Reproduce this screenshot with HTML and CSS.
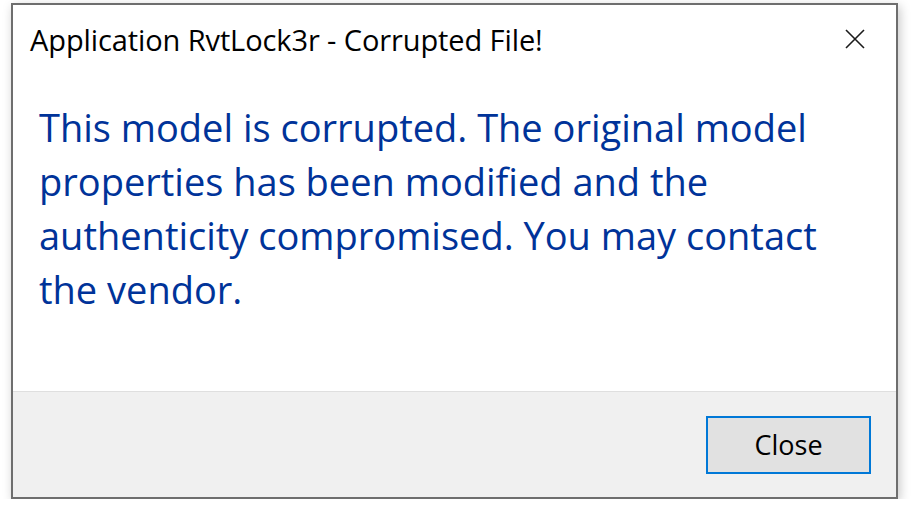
FILE: index.html
```html
<!DOCTYPE html>
<html lang="en">
<head>
<meta charset="utf-8">
<title>Application RvtLock3r - Corrupted File!</title>
<link rel="stylesheet" href="styles.css">
</head>
<body>
<div class="dialog">
  <div class="titlebar">
    <span class="title">Application RvtLock3r - Corrupted File!</span>
    <button class="close-x" aria-label="Close">
      <svg width="20" height="20" viewBox="0 0 20 20"><path d="M1 1 L19 19 M19 1 L1 19" stroke="#1b1b1b" stroke-width="1.6" fill="none"/></svg>
    </button>
  </div>
  <div class="content">
    <p class="message">This model is corrupted. The original model properties has been modified and the authenticity compromised. You may contact the vendor.</p>
  </div>
  <div class="footer">
    <button class="btn">Close</button>
  </div>
</div>
</body>
</html>
```
FILE: styles.css
```css
html, body {
  margin: 0;
  padding: 0;
  background: #ffffff;
}
body {
  padding: 3px 0 0 11px;
  font-family: "Open Sans", "Noto Sans", sans-serif;
}
.dialog {
  width: 883px;
  height: 492px;
  border: 2px solid #6e6e6e;
  background: #ffffff;
  box-shadow: 2px 3px 10px rgba(0, 0, 0, 0.22);
  display: flex;
  flex-direction: column;
}
.titlebar {
  height: 68px;
  display: flex;
  align-items: center;
  justify-content: space-between;
  padding: 0 31px 0 17px;
}
.title {
  font-size: 29px;
  color: #000000;
  letter-spacing: -0.1px;
}
.close-x {
  border: 0;
  background: transparent;
  padding: 0;
  width: 20px;
  height: 20px;
  display: flex;
}
.content {
  flex: 1;
  padding: 27px 60px 0 26px;
}
.message {
  margin: 0;
  font-size: 38px;
  line-height: 54px;
  color: #003399;
}
.footer {
  height: 105px;
  border-top: 1px solid #dfdfdf;
  background: #f0f0f0;
  display: flex;
  align-items: center;
  justify-content: flex-end;
  padding-right: 25px;
}
.btn {
  width: 165px;
  height: 58px;
  border: 2px solid #0078d7;
  background: #e1e1e1;
  font-family: "Open Sans", "Noto Sans", sans-serif;
  font-size: 27px;
  color: #000000;
  padding: 0;
}
```
